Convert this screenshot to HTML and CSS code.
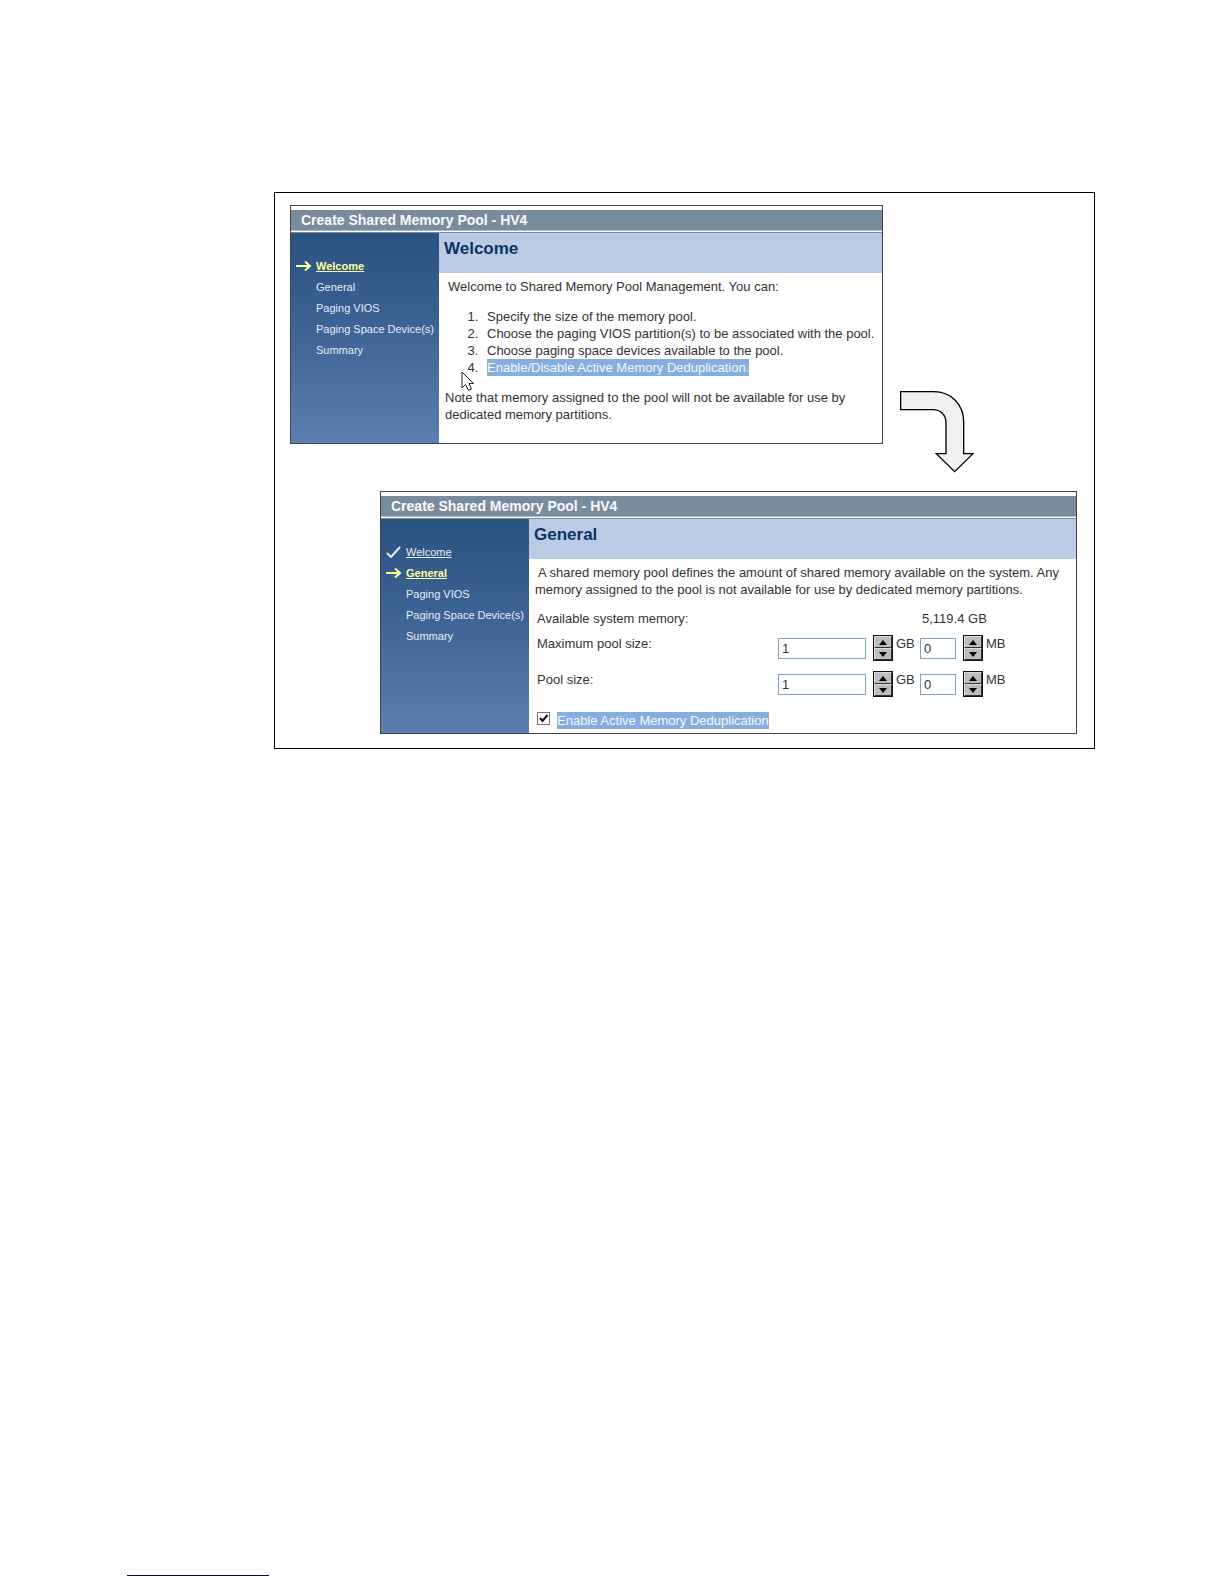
FILE: index.html
```html
<!DOCTYPE html>
<html lang="en">
<head>
<meta charset="utf-8">
<title>Create Shared Memory Pool</title>
<link rel="stylesheet" href="styles.css">
</head>
<body>
<main class="figure">
  <div class="first-step">
    <section class="panel">
      <h1 class="panel-title">Create Shared Memory Pool - HV4</h1>
      <div class="panel-body">
        <nav class="steps" aria-label="Welcome steps">
          <ul class="step-list">
            <li class="step current">
              <svg class="step-icon" viewBox="0 0 16 12" aria-hidden="true"><path d="M0 6H14M9 1.500L14 6L9 10.500"/></svg>
              <a href="#welcome">Welcome</a>
            </li>
            <li class="step"><span>General</span></li>
            <li class="step"><span>Paging VIOS</span></li>
            <li class="step"><span>Paging Space Device(s)</span></li>
            <li class="step"><span>Summary</span></li>
          </ul>
        </nav>
        <div class="page" id="welcome">
          <h2 class="page-title">Welcome</h2>
          <div class="page-content">
            <p class="intro">Welcome to Shared Memory Pool Management. You can:</p>
            <div class="tasks-wrap">
              <ol class="tasks">
                <li>Specify the size of the memory pool.</li>
                <li>Choose the paging VIOS partition(s) to be associated with the pool.</li>
                <li>Choose paging space devices available to the pool.</li>
                <li><mark>Enable/Disable Active Memory Deduplication.</mark></li>
              </ol>
              <svg class="cursor" viewBox="0 0 14 21" aria-hidden="true"><path d="M1 1V17L4.500 13.500L7.500 19.500L10.500 18L8 12.500H12.500Z"/></svg>
            </div>
            <p class="note">Note that memory assigned to the pool will not be available for use by dedicated memory partitions.</p>
          </div>
        </div>
      </div>
    </section>
    <svg class="flow-arrow" viewBox="59 62 222 246" aria-hidden="true"><path d="M61 64H160C212 64 250 102 250 154V250H278L223 304L168 250H197V158C197 134 181 118 157 118H61Z"/></svg>
  </div>

  <section class="panel second-step">
    <h1 class="panel-title">Create Shared Memory Pool - HV4</h1>
    <div class="panel-body">
      <nav class="steps" aria-label="General steps">
        <ul class="step-list">
          <li class="step">
            <svg class="step-icon" viewBox="0 0 16 12" aria-hidden="true"><path d="M1 7L5 11L14 1"/></svg>
            <a href="#welcome">Welcome</a>
          </li>
          <li class="step current">
            <svg class="step-icon" viewBox="0 0 16 12" aria-hidden="true"><path d="M0 6H14M9 1.500L14 6L9 10.500"/></svg>
            <a href="#general">General</a>
          </li>
          <li class="step"><span>Paging VIOS</span></li>
          <li class="step"><span>Paging Space Device(s)</span></li>
          <li class="step"><span>Summary</span></li>
        </ul>
      </nav>
      <div class="page" id="general">
        <h2 class="page-title">General</h2>
        <form class="page-content">
          <p class="intro">A shared memory pool defines the amount of shared memory available on the system. Any memory assigned to the pool is not available for use by dedicated memory partitions.</p>
          <div class="fields">
            <div class="field available">
              <span class="field-label">Available system memory:</span>
              <span class="available-value">5,119.4 GB</span>
            </div>
            <div class="field">
              <label class="field-label" for="max-gb">Maximum pool size:</label>
              <input class="number wide" id="max-gb" type="text" value="1">
              <span class="spinner">
                <button type="button" aria-label="Increase maximum GB"><svg viewBox="0 0 10 5"><path d="M1 5L5 0L9 5Z"/></svg></button>
                <button type="button" aria-label="Decrease maximum GB"><svg viewBox="0 0 10 5"><path d="M1 0L5 5L9 0Z"/></svg></button>
              </span>
              <span class="unit">GB</span>
              <input class="number" type="text" value="0" aria-label="Maximum pool size, MB">
              <span class="spinner">
                <button type="button" aria-label="Increase maximum MB"><svg viewBox="0 0 10 5"><path d="M1 5L5 0L9 5Z"/></svg></button>
                <button type="button" aria-label="Decrease maximum MB"><svg viewBox="0 0 10 5"><path d="M1 0L5 5L9 0Z"/></svg></button>
              </span>
              <span class="unit">MB</span>
            </div>
            <div class="field">
              <label class="field-label" for="pool-gb">Pool size:</label>
              <input class="number wide" id="pool-gb" type="text" value="1">
              <span class="spinner">
                <button type="button" aria-label="Increase GB"><svg viewBox="0 0 10 5"><path d="M1 5L5 0L9 5Z"/></svg></button>
                <button type="button" aria-label="Decrease GB"><svg viewBox="0 0 10 5"><path d="M1 0L5 5L9 0Z"/></svg></button>
              </span>
              <span class="unit">GB</span>
              <input class="number" type="text" value="0" aria-label="Pool size, MB">
              <span class="spinner">
                <button type="button" aria-label="Increase MB"><svg viewBox="0 0 10 5"><path d="M1 5L5 0L9 5Z"/></svg></button>
                <button type="button" aria-label="Decrease MB"><svg viewBox="0 0 10 5"><path d="M1 0L5 5L9 0Z"/></svg></button>
              </span>
              <span class="unit">MB</span>
            </div>
            <div class="dedup">
              <span class="tick">
                <input type="checkbox" id="dedup" checked>
                <svg viewBox="0 0 13 13" aria-hidden="true"><path d="M3 6L5.500 9L10.500 3"/></svg>
              </span>
              <label for="dedup"><mark>Enable Active Memory Deduplication</mark></label>
            </div>
          </div>
        </form>
      </div>
    </div>
  </section>
</main>
<footer class="footer"><hr class="footer-rule"></footer>
</body>
</html>
```
FILE: styles.css
```css
* {
  box-sizing: border-box;
}

body {
  display: flex;
  flex-direction: column;
  min-height: 100vh;
  margin: 0;
  background: #fff;
  color: #333;
  font: 13px/17px "Liberation Sans", Arial, sans-serif;
}

h1, h2, p, ul, ol {
  margin: 0;
  padding: 0;
}

mark {
  display: block;
  width: fit-content;
  background: #87addf;
  color: #f6f9ff;
}

.figure {
  margin: 192px 129px 0 274px;
  padding: 12px 17px 14px 15px;
  border: 1px solid #000;
}

.first-step {
  display: flex;
  align-items: flex-start;
  gap: 17px;
}

.first-step .panel {
  flex: 1;
}

.flow-arrow {
  flex: none;
  width: 74px;
  height: 82px;
  margin: 186px 104px 0 0;
  fill: #f1f1f1;
  stroke: #000;
  stroke-width: 4;
}

.panel {
  padding-top: 4px;
  border: 1px solid #444;
  background: #fff;
}

.second-step {
  margin: 18px 0 0 90px;
}

.panel-title {
  margin-bottom: 1px;
  padding-left: 10px;
  border-bottom: 1px solid #a9b9cc;
  background: #788c9e;
  color: #f8fafc;
  font-size: 14px;
  line-height: 20px;
}

.panel-body {
  display: flex;
  border-top: 1px solid #788ba3;
}

.steps {
  flex: none;
  width: 148px;
  padding-top: 23px;
  background: linear-gradient(#29537f, #375f90 35%, #5c7eb0);
  color: #e6edf6;
  font-size: 11px;
}

.step-list {
  display: grid;
  gap: 1px;
  list-style: none;
}

.step {
  display: grid;
  grid-template-columns: 16px 1fr;
  column-gap: 4px;
  align-items: center;
  padding-left: 5px;
  line-height: 20px;
  white-space: nowrap;
}

.step span,
.step a {
  grid-column: 2;
  color: inherit;
}

.step-icon {
  width: 16px;
  height: 12px;
  fill: none;
  stroke: currentColor;
  stroke-width: 2;
}

.step.current {
  color: #ffff9c;
  font-weight: bold;
}

.page {
  flex: 1;
  min-width: 0;
}

.page-title {
  height: 40px;
  padding: 6px 5px 0;
  background: #bbcbe6;
  color: #0b3368;
  font-size: 17px;
  line-height: 20px;
}

.page-content {
  padding: 5px 8px 0 6px;
}

.intro {
  text-indent: 3px;
}

.tasks-wrap {
  position: relative;
  margin: 13px 0;
}

.tasks {
  padding-left: 37px;
}

.tasks li {
  padding-left: 5px;
  white-space: nowrap;
}

.cursor {
  position: absolute;
  bottom: -16px;
  left: 16px;
  width: 14px;
  height: 21px;
  fill: #fff;
  stroke: #222;
}

.note {
  padding: 0 10px 20px 0;
}

.fields {
  padding: 12px 0 4px 2px;
}

.field {
  display: flex;
  align-items: center;
  margin-bottom: 10px;
}

.field-label {
  flex: none;
  width: 241px;
  align-self: flex-start;
}

.available {
  margin-bottom: 8px;
}

.available-value {
  margin-left: 144px;
}

.number {
  width: 36px;
  height: 21px;
  padding: 0 3px;
  border: 1px solid #7fa3c8;
  background: #fff;
  color: #333;
  font: inherit;
}

.number.wide {
  width: 88px;
}

.spinner {
  display: flex;
  flex-direction: column;
  width: 20px;
  height: 26px;
  margin: 0 3px 0 7px;
  border: 1px solid #111;
}

.spinner button {
  display: flex;
  flex: 1;
  align-items: center;
  justify-content: center;
  padding: 0;
  border: 1px solid;
  border-color: #ddd #333 #333 #ddd;
  background: #bdbdbd;
}

.spinner svg {
  width: 10px;
  height: 5px;
}

.unit {
  align-self: flex-start;
  width: 24px;
}

.dedup {
  display: flex;
  align-items: flex-start;
  gap: 7px;
  padding-top: 5px;
}

.tick {
  display: grid;
}

.tick input,
.tick svg {
  grid-area: 1 / 1;
  width: 13px;
  height: 13px;
  margin: 0;
}

.tick input {
  appearance: none;
  border: 1px solid #777;
  background: #fff;
}

.tick svg {
  fill: none;
  stroke: #111;
  stroke-width: 2;
  pointer-events: none;
}

.footer {
  margin-top: auto;
  padding: 0 127px 8px;
}

.footer-rule {
  width: 142px;
  margin: 0;
  border: 0;
  border-top: 1px solid #000080;
}
```
